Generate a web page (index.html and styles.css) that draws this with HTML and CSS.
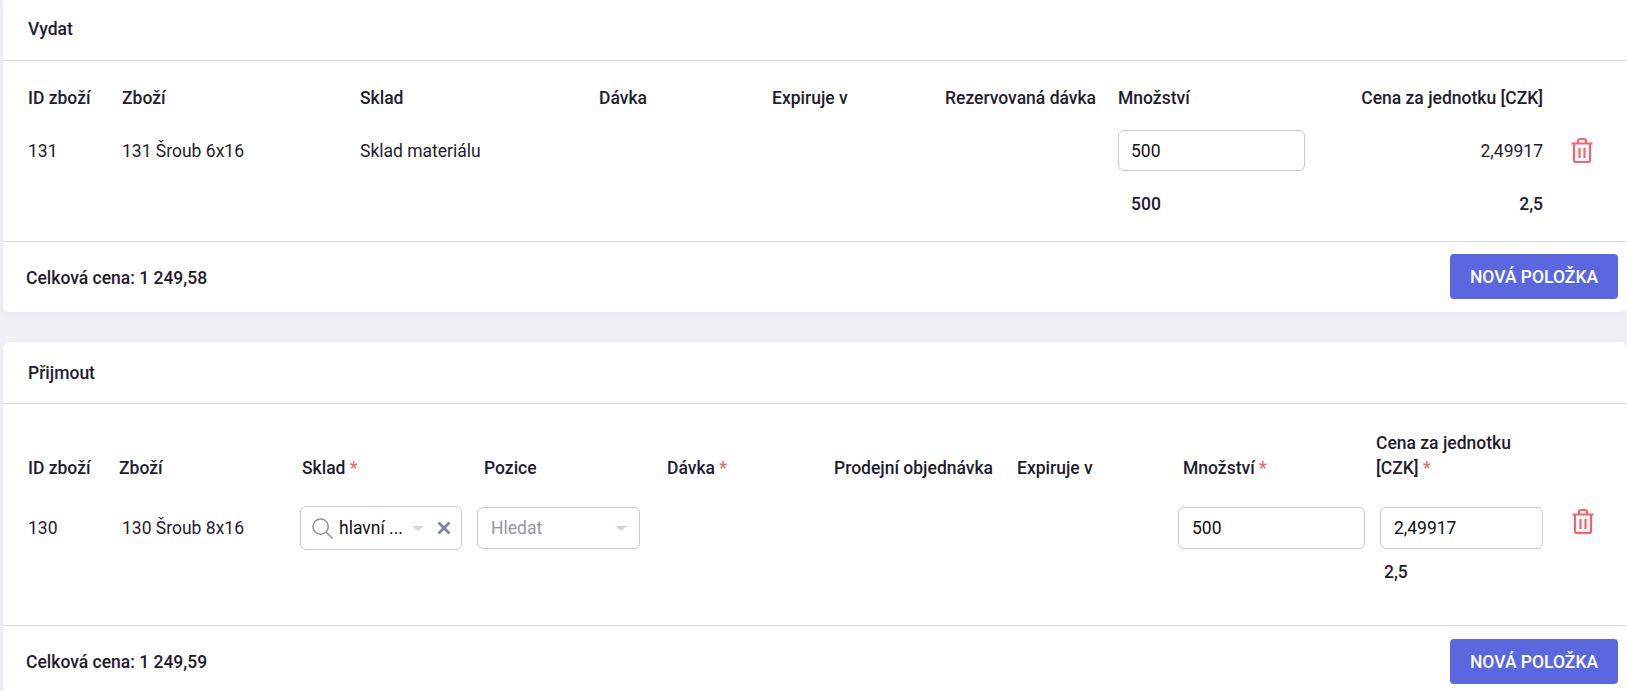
FILE: index.html
```html
<!DOCTYPE html>
<html lang="cs">
<head>
<meta charset="utf-8">
<title>Vydat a přijmout</title>
<link rel="stylesheet" href="styles.css">
</head>
<body>
<section class="card card-issue">
  <h2 class="card-title">Vydat</h2>
  <div class="items items-issue">
    <div class="th">ID zboží</div>
    <div class="th">Zboží</div>
    <div class="th">Sklad</div>
    <div class="th">Dávka</div>
    <div class="th">Expiruje v</div>
    <div class="th">Rezervovaná dávka</div>
    <div class="th">Množství</div>
    <div class="th right">Cena za jednotku [CZK]</div>
    <div></div>

    <div class="td">131</div>
    <div class="td">131 Šroub 6x16</div>
    <div class="td">Sklad materiálu</div>
    <div></div>
    <div></div>
    <div></div>
    <div><input class="field" type="text" value="500"></div>
    <div class="td right">2,49917</div>
    <div class="trash-cell">
      <svg class="trash" viewBox="0 0 24 26" aria-hidden="true"><path d="M1.5 6h21M8 6V3.5C8 2 9 1.5 10 1.5h4c1 0 2 .5 2 2V6M4 6v16.5c0 1.2.8 2 2 2h12c1.2 0 2-.8 2-2V6M9.5 10.5v10M14.5 10.5v10"/></svg>
    </div>

    <div class="sum sum-qty">500</div>
    <div class="sum right">2,5</div>
  </div>
  <footer class="card-foot">
    <span class="total">Celková cena: 1 249,58</span>
    <button class="btn" type="button">NOVÁ POLOŽKA</button>
  </footer>
</section>

<section class="card card-receive">
  <h2 class="card-title">Přijmout</h2>
  <div class="items items-receive">
    <div class="th">ID zboží</div>
    <div class="th">Zboží</div>
    <div class="th inset-1">Sklad <span class="req">*</span></div>
    <div class="th">Pozice</div>
    <div class="th">Dávka <span class="req">*</span></div>
    <div class="th">Prodejní objednávka</div>
    <div class="th">Expiruje v</div>
    <div class="th inset-4">Množství <span class="req">*</span></div>
    <div class="th inset-1">Cena za jednotku<br>[CZK] <span class="req">*</span></div>
    <div></div>

    <div class="td">130</div>
    <div class="td inset-3">130 Šroub 8x16</div>
    <div class="select select-filled">
      <svg class="search" viewBox="0 0 22 22" aria-hidden="true"><circle cx="9" cy="9" r="8"/><path d="M15 15l6.5 6.5"/></svg>
      <span class="select-value">hlavní ...</span>
      <span class="caret"></span>
      <svg class="clear" viewBox="0 0 14 14" aria-hidden="true"><path d="M1.5 1.5l11 11M12.5 1.5l-11 11"/></svg>
    </div>
    <div class="select select-empty">
      <span class="select-placeholder">Hledat</span>
      <span class="caret"></span>
    </div>
    <div></div>
    <div></div>
    <div></div>
    <div class="qty-cell"><input class="field" type="text" value="500"></div>
    <div class="price-cell"><input class="field" type="text" value="2,49917"></div>
    <div class="trash-cell trash-cell-up">
      <svg class="trash" viewBox="0 0 24 26" aria-hidden="true"><path d="M1.5 6h21M8 6V3.5C8 2 9 1.5 10 1.5h4c1 0 2 .5 2 2V6M4 6v16.5c0 1.2.8 2 2 2h12c1.2 0 2-.8 2-2V6M9.5 10.5v10M14.5 10.5v10"/></svg>
    </div>

    <div class="sum sum-price">2,5</div>
  </div>
  <footer class="card-foot">
    <span class="total">Celková cena: 1 249,59</span>
    <button class="btn" type="button">NOVÁ POLOŽKA</button>
  </footer>
</section>
</body>
</html>
```

FILE: styles.css
```css
* { box-sizing: border-box; }

html, body {
  height: 691px;
  overflow: hidden;
}

body {
  margin: 0;
  padding-left: 3px;
  background: #eff0f6;
  font-family: Roboto, "Liberation Sans", sans-serif;
  font-size: 17.5px;
  color: #1f1c2e;
  display: flex;
  flex-direction: column;
  gap: 30px;
}

.card {
  background: #fff;
  border-radius: 0 0 6px 6px;
  box-shadow: 0 2px 10px rgba(60, 60, 110, .04);
  flex: none;
}

.card-receive { border-radius: 6px 6px 0 0; }

.card-title {
  margin: 0;
  height: 61px;
  padding: 0 25px 2px;
  display: flex;
  align-items: center;
  font-size: 17.5px;
  font-weight: 500;
  border-bottom: 1px solid #dcdce0;
}

.card-receive .card-title {
  height: 62px;
  padding-bottom: 0;
}

.items {
  display: grid;
  align-items: center;
  padding-left: 25px;
  border-bottom: 1px solid #dcdce0;
}

.items-issue {
  grid-template-columns: 94px 238px 239px 173px 173px 173px 187px 238px 1fr;
  grid-template-rows: 69px 41px 70px;
  height: 181px;
  align-content: start;
}

.items-issue .th { align-self: start; padding-top: 25px; }

.items-receive {
  grid-template-columns: 91px 182px 183px 183px 167px 183px 162px 196px 167px 1fr;
  grid-template-rows: 103px 42px 47px;
  height: 222px;
  align-content: start;
}

.items-receive .th { align-self: end; padding-bottom: 26px; line-height: 25px; }

.th {
  font-weight: 500;
  line-height: 24px;
  white-space: nowrap;
}

.td { font-weight: 400; }

.right { text-align: right; }

.req { color: #f8616e; }

.inset-1 { padding-left: 1px; }
.inset-3 { padding-left: 3px; }
.inset-4 { padding-left: 4px; }

.field {
  display: block;
  width: 187px;
  height: 41px;
  padding: 0 12px;
  border: 1px solid #c9c8d3;
  border-radius: 6px;
  background: #fff;
  font: 400 17.5px Roboto, "Liberation Sans", sans-serif;
  color: #111;
  outline: none;
}

.items-receive .field { width: 187px; height: 42px; padding-left: 13px; }
.items-receive .price-cell .field { width: 163px; }

.qty-cell { margin-left: -1px; }
.price-cell { padding-left: 5px; }

.trash-cell {
  display: flex;
  padding-left: 27px;
}

.trash-cell-up {
  align-self: start;
  padding-top: 1px;
  padding-left: 29px;
}

.trash {
  width: 24px;
  height: 27px;
  fill: none;
  stroke: #f8616e;
  stroke-width: 2.2;
}

.sum {
  font-weight: 500;
  align-self: start;
  line-height: 24px;
  padding-top: 21px;
}

.sum-qty {
  grid-column: 7;
  padding-left: 13px;
}

.items-issue .sum.right { grid-column: 8; }

.sum-price {
  grid-column: 9;
  padding: 11px 0 0 9px;
}

.select {
  display: flex;
  align-items: center;
  height: 42px;
  border: 1px solid #c9c8d3;
  border-radius: 6px;
  background: #fff;
}

.select-filled {
  width: 162px;
  margin-left: -1px;
  padding: 0 10px 0 11px;
  height: 44px;
}

.select-empty {
  width: 163px;
  margin-left: -7px;
  padding-left: 13px;
}

.search {
  width: 21px;
  height: 21px;
  flex: none;
  fill: none;
  stroke: #8f93a3;
  stroke-width: 1.6;
}

.select-value {
  margin-left: 6px;
  color: #111;
  white-space: nowrap;
}

.select-placeholder { color: #96959e; }

.caret {
  width: 0;
  height: 0;
  border-left: 6px solid transparent;
  border-right: 6px solid transparent;
  border-top: 5px solid #d5d5dc;
}

.select-filled .caret { margin-left: auto; margin-right: 13px; }
.select-empty .caret { margin-left: auto; margin-right: 12px; }

.clear {
  width: 14px;
  height: 14px;
  flex: none;
  fill: none;
  stroke: #80849a;
  stroke-width: 2.8;
}

.card-foot {
  display: flex;
  align-items: center;
  justify-content: space-between;
  padding: 13px 9px 12px 23px;
}

.card-issue .card-foot {
  height: 70px;
  padding: 12px 9px 13px 23px;
}

.total { font-weight: 500; }

.card-issue .total { padding-top: 3px; }
.card-receive .total { padding-top: 1px; }

.btn {
  width: 168px;
  height: 45px;
  border: 0;
  border-radius: 4px;
  background: #5b67de;
  color: #fff;
  font: 500 17.5px Roboto, "Liberation Sans", sans-serif;
}
```
